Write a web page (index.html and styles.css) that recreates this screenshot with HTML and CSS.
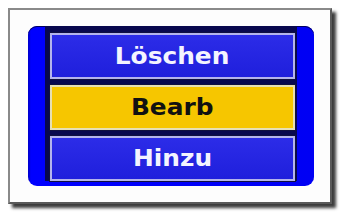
FILE: index.html
```html
<!DOCTYPE html>
<html>
<head>
<meta charset="utf-8">
<link rel="stylesheet" href="styles.css">
</head>
<body>
<div class="frame">
  <div class="panel">
    <div class="inner">
      <div class="btn btn-blue btn-first"><span class="label">Löschen</span></div>
      <div class="btn btn-yellow"><span class="label">Bearb</span></div>
      <div class="btn btn-blue"><span class="label">Hinzu</span></div>
    </div>
  </div>
</div>
</body>
</html>
```
FILE: styles.css
```css
html, body {
  margin: 0;
  padding: 0;
  background: #ffffff;
}
body {
  width: 340px;
  height: 212px;
  overflow: hidden;
  font-family: "DejaVu Sans", "Liberation Sans", sans-serif;
}
.frame {
  box-sizing: border-box;
  margin: 8px 0 0 8px;
  width: 324px;
  height: 196px;
  border: 2px solid #8a8a8a;
  border-right-color: #5a5a5a;
  border-bottom-color: #5a5a5a;
  background: #fdfdfd;
  box-shadow: 4px 4px 3px #3c3c3c;
  padding: 16px 16px 16px 18px;
}
.panel {
  box-sizing: border-box;
  height: 160px;
  background: linear-gradient(90deg, #0000c8 0px, #0000ff 3px, #0000f4 100%);
  border-radius: 9px;
  box-shadow: inset 0 1px 0 #000060;
  padding: 0 17px 5px 17px;
}
.inner {
  background: #08084e;
  padding: 7px 2px 0 5px;
  display: flex;
  flex-direction: column;
  gap: 6px;
}
.btn {
  box-sizing: border-box;
  height: 45px;
  display: flex;
  align-items: center;
  justify-content: center;
  border: 2px solid #b4b4ec;
  box-shadow: 0 0 0 1px #101040;
}
.btn-first {
  height: 46px;
}
.btn-blue {
  background: linear-gradient(#2c2ce8, #1f1fdc);
  color: #f4f4ff;
}
.btn-yellow {
  background: #f6c600;
  border-color: #e6dfb4;
  color: #111111;
}
.label {
  display: inline-block;
  font-weight: bold;
  font-size: 23px;
  line-height: 1;
  transform: scaleX(1.08);
}
```
